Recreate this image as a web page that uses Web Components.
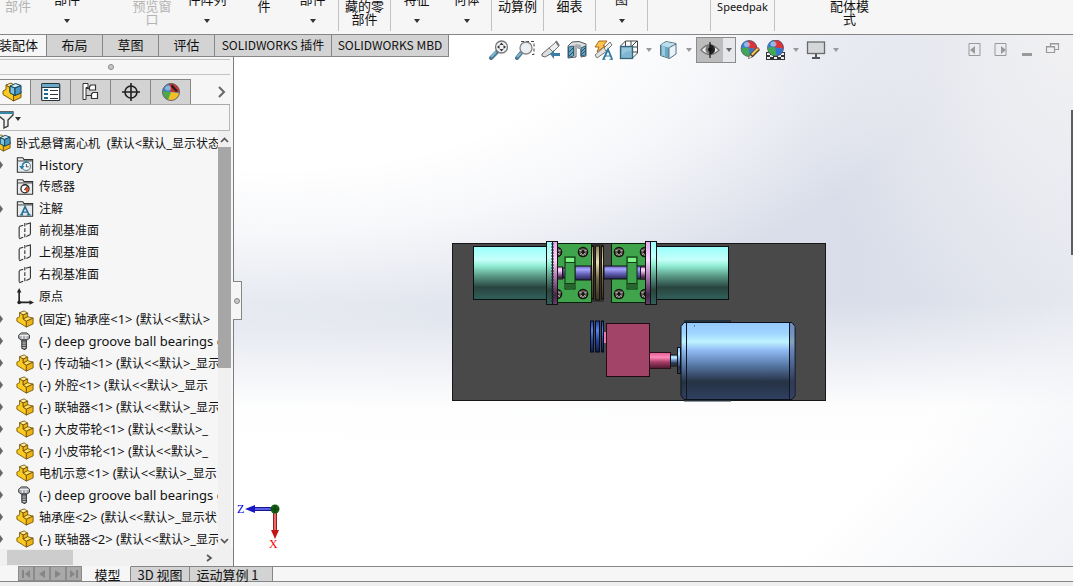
<!DOCTYPE html>
<html lang="zh-CN">
<head>
<meta charset="utf-8">
<meta name="viewport" content="width=device-width, initial-scale=1">
<title>SOLIDWORKS</title>
<style>
html,body{height:100%;margin:0}
body{font-family:"Noto Sans","Noto Sans CJK SC",sans-serif;font-size:12px;color:#111;overflow:hidden}
</style>
</head>
<body>
<cad-app></cad-app>
<script>
const arrow = c => `<svg width="6" height="4" viewBox="0 0 6 4"><path d="M0 0h6L3 4z" fill="${c}"/></svg>`;
const define = (name, css, html) => customElements.define(name, class extends HTMLElement {
  connectedCallback() {
    if (this.shadowRoot) return;
    const root = this.attachShadow({mode: 'open'});
    const markup = typeof html === 'function' ? html(this) : html;
    root.innerHTML = `<style>*{box-sizing:border-box}button{font:inherit;color:inherit;border:0;padding:0;margin:0;background:none}svg{display:block;flex:none}${css}</style>${markup}`;
  }
});

/* Small icons, all on a 20 x 20 grid */
const ball = (cx, cy, r) => `<g><circle cx="${cx}" cy="${cy}" r="${r}" fill="#3f86dc"/><path d="M${cx} ${cy}V${cy-r}A${r} ${r} 0 0 0 ${cx-r} ${cy}z" fill="#3a80d8"/><path d="M${cx-1} ${cy-r}A${r} ${r} 0 0 1 ${cx+r} ${cy+1}Q${cx+3} ${cy-1} ${cx} ${cy}z" fill="#d8343a"/><path d="M${cx-r} ${cy}Q${cx-3} ${cy-2} ${cx} ${cy}L${cx+1} ${cy+r}A${r} ${r} 0 0 1 ${cx-r} ${cy}z" fill="#43a854"/><path d="M${cx} ${cy}L${cx+r} ${cy+1}A${r} ${r} 0 0 1 ${cx+1} ${cy+r}z" fill="#3675cf"/><ellipse cx="${cx-2}" cy="${cy-r/2}" rx="3" ry="2.5" fill="#fff" opacity=".45"/><circle cx="${cx}" cy="${cy}" r="${r}" fill="none" stroke="#545c68" stroke-width=".7"/></g>`;
const block = `<g stroke="#6a4c00" stroke-width=".9" stroke-linejoin="round"><path d="M4 3l4 2.500V10l3.500 2.500v6.500L1 12.500V9l3-1.500z" fill="#fccb22"/><path d="M4 3l5-2 4 2.500-5 2z" fill="#fff0a0"/><path d="M8 5.500l5-2V8l-5 2z" fill="#eeb315"/><path d="M8 10l5-2.500L19 9l-7.500 3.500z" fill="#ffe066"/><path d="M11.500 12.500L19 9v6.500L11.500 19z" fill="#eeb315"/></g>`;
const ICONS = {
  part: block,
  asm: block + `<g stroke="#173f56" stroke-width="1" stroke-linejoin="round"><path d="M8 4l5 2v7.500L8 11z" fill="#7fc3e2"/><path d="M8 4l5.500-2.500L19 3.500 13 6z" fill="#c9ebf8"/><path d="M13 6l6-2.500V11l-6 2.500z" fill="#4b98c0"/></g>`,
  bolt: `<path d="M3 3.500L6 1h6l3 2.500V7l-3 2H6L3 7z" fill="#a9adb1" stroke="#303336"/><path d="M4 4h10M7 4v4m4-4v4" stroke="#f5f5f5"/><path d="M6.500 9h5v9l-2 1.500-3-1.500z" fill="#c3c6c9" stroke="#303336" stroke-width="1.200"/><path d="M6.500 11h5m-5 2.500h5m-5 2.500h5" stroke="#333"/>`,
  history: `<path d="M1.500 18v-16h6l1.500 2h9.500v14z" fill="#e8ebed" stroke="#333" stroke-width="1.200"/><path d="M2 5.500h16" stroke="#333"/><circle cx="11.500" cy="11.500" r="4.500" fill="#f4fbff" stroke="#46606e"/><path d="M7 11a4.500 4.500 0 0 1 7-3.500" stroke="#277ca8" stroke-width="1.600" fill="none"/><path d="M3.500 11h6l-3 4z" fill="#277ca8"/><path d="M11.500 9v3h2.500" stroke="#333" fill="none"/>`,
  sensor: `<path d="M1.500 18v-16h6l1.500 2h9.500v14z" fill="#e8ebed" stroke="#333" stroke-width="1.200"/><path d="M2 5.500h16" stroke="#333"/><circle cx="10" cy="12" r="4.500" fill="#fff" stroke="#222" stroke-width="1.400"/><path d="M10 12.500l3-3.500 1 4-2.500 3z" fill="#e44b24"/><path d="M9 13.500l4-5" stroke="#222"/>`,
  note: `<path d="M1.500 18v-16h6l1.500 2h9.500v14z" fill="#e8ebed" stroke="#333" stroke-width="1.200"/><path d="M2 5.500h16" stroke="#333"/><path d="M6 16.500l4-9 4.500 9" fill="none" stroke="#246c94" stroke-width="1.800"/><path d="M7.500 13.500H13M4.500 16.500h3.500m4 0h4.500" fill="none" stroke="#246c94" stroke-width="1.200"/>`,
  plane: `<path d="M3.500 17.500V5.500M3.500 5L8 3.500m3-1L16 1v12.500M16 14l-4.500 2M8 17l-4.500 1.500" fill="none" stroke="#2d2d2d" stroke-width="1.200"/><path d="M9.800 1v17" stroke="#2d2d2d" stroke-width="1.200" stroke-dasharray="4 2"/>`,
  origin: `<path d="M3.500 3v13H16" fill="none" stroke="#222" stroke-width="1.800"/><path d="M3.500 0L6 5H1zM20 16l-5-2.500v5z" fill="#222"/><circle cx="3.500" cy="16" r="2" fill="#222"/>`,
  list: `<rect x=".7" y="1.500" width="18" height="17" rx="1" fill="#fff" stroke="#26343e" stroke-width="1.200"/><path d="M1 2h17v3H1z" fill="#69a9ca"/><path d="M1 5.500h17" stroke="#26343e"/><path d="M3 7h4v2H3zm0 4h4v2H3zm0 4h4v2H3z" fill="#1f698e"/><path d="M9 8.500h8M9 12.500h8M9 16.500h8" stroke="#333"/>`,
  config: `<path d="M3.500 2v16M7.500 5.500h-4M9 13.500H3.500" fill="none" stroke="#333" stroke-width="1.200"/><path d="M2 1.500h5v4H5v12H2z" fill="#fff" stroke="#333"/><path d="M8.500 4.500L10 3h4.500v5h-6zM10.500 12l1.500-1.500h4.500v6h-6z" fill="#fff" stroke="#333" stroke-width="1.200"/><path d="M5 6.500h3M5 13.500h5" stroke="#333"/>`,
  target: `<circle cx="10" cy="10" r="6" fill="none" stroke="#202020" stroke-width="1.600"/><path d="M10 1v18M1 10h18" stroke="#202020" stroke-width="1.600"/>`,
  display: `<circle cx="10" cy="10" r="8.500" fill="#346bc1"/><path d="M10 10L1.500 10A8.500 8.500 0 0 1 10 1.500z" fill="#3984c6"/><path d="M10 10L8 1.500A8.500 8.500 0 0 1 18.500 10z" fill="#d82d2d"/><path d="M10 10L1.500 9A8.500 8.500 0 0 0 8 18z" fill="#51a849"/><path d="M10 10l8.500 1A8.500 8.500 0 0 1 7 18z" fill="#f0c127"/><path d="M11 2l6 7-2 1-5-5z" fill="#222"/><ellipse cx="7" cy="6" rx="3" ry="2.500" fill="#fff" opacity=".4"/><circle cx="10" cy="10" r="8.500" fill="none" stroke="#666"/>`,
  zoomfit: `<path d="M8 12l-6 6" stroke="#4b788f" stroke-width="4" stroke-linecap="round"/><path d="M7 12l-5 5" stroke="#79b6d2" stroke-width="2"/><circle cx="12.500" cy="7" r="6" fill="#eff3f5" stroke="#777" stroke-width="1.300"/><path d="M12.500 2.500l2 2.500h-4zm0 9l2-2.500h-4zM8 7l2.500-2v4zm9 0l-2.500-2v4z" fill="#333"/>`,
  zoomarea: `<path d="M6 1.500h13v13h-4" fill="none" stroke="#444" stroke-dasharray="3 2"/><path d="M6 13l-4 5" stroke="#4b788f" stroke-width="4" stroke-linecap="round"/><path d="M6 13l-4 4" stroke="#79b6d2" stroke-width="2"/><circle cx="11" cy="8" r="6" fill="#e9eff2" stroke="#858585" stroke-width="1.300"/>`,
  prev: `<path d="M1 14l8-7 4 5-9 5-3-1z" fill="#dedede" stroke="#666"/><path d="M8 8l7-6 3 4-6 6z" fill="#efefef" stroke="#777"/><path d="M15 1l3 5" stroke="#777" stroke-width="2"/><path d="M9 14l4-4v3h6v3h-6v3z" fill="#397fa5"/>`,
  section: `<path d="M1 6l4-4q7-2 14 2v12l-5 1V9L9 7v10l-8 1z" fill="#dedede" stroke="#505a60"/><path d="M1.500 7l5-1v10l-5 1.500zM14 8l4.500-2v9L14 16z" fill="#6aa7c4" stroke="#325f76"/><path d="M2 12l4-4M2 16l4-4m8 0l4-4m-4 7l4-4" stroke="#204e65"/><path d="M7 6l2-2 5 1v4L9 8v8H7z" fill="#a8adb0"/>`,
  annot: `<path d="M2 15l9-8 3 4-10 7z" fill="#e3e3e3" stroke="#777"/><path d="M11 8l6-6 2 3-6 6z" fill="#eee" stroke="#777"/><path d="M6 1h8l-4 5h2l-8 6 2-5H2z" fill="#ffc44d" stroke="#a86a24"/><path d="M10.500 19L15 9.500 19 19" fill="none" stroke="#2e789f" stroke-width="1.800"/><path d="M12 16h5.500M9 19.300h3.500m4 0H20" stroke="#2e789f"/>`,
  orient: `<path d="M1.500 6l5-5h12v12l-5 5M6.500 1v5M12 1v5m1 0l5-5M14 7h4m-4 5h4" fill="none" stroke="#444"/><rect x="1.500" y="6.500" width="12" height="12" fill="#80b6cf" stroke="#35657c" stroke-width="1.300"/><path d="M3 8h9v3q-5 0-9 4z" fill="#a7d2e5" opacity=".6"/>`,
  cube: `<path d="M1.500 5L7 1.500l10 2V14l-6.500 4.500-9-3z" fill="#eaf4f8" stroke="#527080"/><path d="M2 5l8 2.500V18l-8-3z" fill="#69a8c5"/><path d="M2 5l5-3 9 2-6 3.500z" fill="#b9deec"/><path d="M10 7.500v11M10.500 7.500L17 4" stroke="#527080"/><path d="M3 6l3 1v9l-3-1z" fill="#bce1ef" opacity=".6"/>`,
  eye: `<path d="M1 10q8-10 18 0-9 9-18 0z" fill="#eee" stroke="#777" stroke-width="1.400"/><circle cx="10" cy="9.500" r="4.600" fill="#777"/><path d="M10 4.500a5 5 0 0 1 0 10z" fill="#222"/><circle cx="10" cy="9.500" r="2" fill="#111"/><path d="M10 2v16" stroke="#111" stroke-width="1.200"/>`,
  appearance: ball(9,8.500,8) + `<path d="M8 19l2-5 7-7 3 3-7 7z" fill="#4e3d2c"/><path d="M11 14l6-6 1.500 1.500-6 6z" fill="#f2c853"/><path d="M9 18l1-3 2 2z" fill="#fff3cf"/><path d="M17 8l1-1 2 2-1 1z" fill="#d36b66"/>`,
  scene: `<path d="M0 12h19v8H0z" fill="#333"/><path d="M1 13h3v2H1zm14 0h3v2h-3zM4 15h3v2H4zm8 0h3v2h-3zM1 17h3v2H1zm7 0h3v2H8zm7 0h3v2h-3z" fill="#eee"/>` + ball(9.500,8,8),
  monitor: `<rect x="1.500" y="2" width="17" height="11.500" fill="#d4d7da" stroke="#6a6a6a" stroke-width="1.300"/><path d="M9 14h2v3h3v2H6v-2h3z" fill="#555"/>`,
  dockL: `<path d="M4 3.500h11v12H4z" fill="none" stroke="#999"/><path d="M10 6v8L5 10z" fill="#999"/>`,
  dockR: `<path d="M4 3.500h11v12H4z" fill="none" stroke="#999"/><path d="M10 6v8l5-4z" fill="#999"/>`,
  min: `<path d="M5 13h10v3H5z" fill="#999"/>`,
  restore: `<path d="M7.500 6V3.500h8v6H12M3.500 6.500h8v6h-8zM7.500 4h8M3.500 7h8" fill="none" stroke="#999" stroke-width="1.200"/>`
};
define('cad-icon', `:host{display:block;width:20px;height:20px;flex:none}svg{width:100%;height:100%}`,
  el => `<svg viewBox="0 0 20 20" aria-hidden="true">${ICONS[el.getAttribute('name')]}</svg>`);

define('ribbon-item', `
:host{display:block;flex:none;width:var(--w);height:31px;font-size:13px}
:host([ruled]){border-left:1px solid #c2c2c2}
:host([small]){font-size:11px}
button{display:flex;flex-direction:column;align-items:center;width:100%;height:31px;line-height:13px;white-space:nowrap;overflow:hidden}
button.menu{justify-content:flex-end;padding-bottom:8px;gap:13px}
span{display:block;flex:none}
:host([disabled]) button{color:#b4b4b4}`,
  el => {
    const menu = el.hasAttribute('menu');
    return `<button class="${menu ? 'menu' : ''}" ${el.hasAttribute('disabled') ? 'disabled' : ''}><span><slot></slot></span>${menu ? arrow('#333') : ''}</button>`;
  });

const RIBBON = [['部件',36,'disabled'],['部件',62,'menu'],['',19],['预览窗<br>口',70,'disabled'],['件阵列',40,'menu'],['',14],['件',46],['部件',51,'menu'],['藏的零<br>部件',52,'ruled'],['特征',52,'ruled menu'],['何体',49,'menu'],['动算例',52,'ruled'],['细表',52,'ruled'],['图',52,'ruled menu'],['',63,'ruled'],['Speedpak',64,'ruled small'],['配体模<br>式',150,'ruled']];
define('cad-ribbon', `
:host{display:flex;height:35px;background:#f6f6f6;border-bottom:1px solid #868686;overflow:hidden}
.gap{flex:none;width:var(--w)}`,
  RIBBON.map(([t,w,a='']) => t || a ? `<ribbon-item style="--w:${w}px" ${a}>${t}</ribbon-item>` : `<div class="gap" style="--w:${w}px"></div>`).join(''));

define('command-tabs', `
:host{display:flex;height:22px;border-bottom:1px solid #868686;background:#d3d3d3;font-size:13px;font-family:"Noto Sans CJK SC",sans-serif}
button{flex:1 1 56px;border-right:1px solid #868686;line-height:20px;white-space:nowrap;min-width:0;display:flex;justify-content:center}
button.on{flex:0 0 47px;background:#f6f6f6;justify-content:flex-end;padding-right:8px;overflow:hidden}
button.wide{flex:0 0 117px;font-size:12px}`,
  `<button class="on">装配体</button><button>布局</button><button>草图</button><button>评估</button><button class="wide">SOLIDWORKS 插件</button><button class="wide">SOLIDWORKS MBD</button>`);

define('view-toolbar', `
:host{display:flex;justify-content:space-between;padding-left:40px;padding-right:10px;height:30px;align-items:center}
nav,aside{display:flex;align-items:center;gap:6px}
button{display:flex;align-items:center;flex:none}
.split{display:flex;border:1px solid #8b8b8b;height:26px;background:#bcbcbc;width:40px;margin:0 -2px 0 -3px}
.split button{height:24px}
.split button:first-child{width:26px;padding-left:3px}
.split button:last-child{width:12px;background:#e5e7eb;justify-content:center}
.drop{width:8px;justify-content:center}`,
  () => {
    const b = (n, l) => `<button aria-label="${l}"><cad-icon name="${n}"></cad-icon></button>`;
    const d = `<button class="drop" aria-label="更多">${arrow('#999')}</button>`;
    return `<nav>${b('zoomfit','整屏显示全图')}${b('zoomarea','局部放大')}${b('prev','上一视图')}${b('section','剖面视图')}${b('annot','动态注解')}${b('orient','视图定向')}${d}${b('cube','显示样式')}${d}<div class="split"><button aria-label="隐藏/显示"><cad-icon name="eye"></cad-icon></button><button aria-label="更多">${arrow('#666')}</button></div>${b('appearance','编辑外观')}${b('scene','应用布景')}${d}${b('monitor','视图设定')}${d}</nav><aside>${b('dockL','左')}${b('dockR','右')}${b('min','最小化')}${b('restore','还原')}</aside>`;
  });

define('manager-tabs', `
:host{display:flex;height:26px;border-bottom:1px solid #a8a8a8;margin-right:3px}
button{width:40px;background:#d3d3d3;border:1px solid #868686;border-left:0;border-bottom:0;display:flex;align-items:center;justify-content:center}
button.on{width:31px;background:#f6f6f6;justify-content:flex-start;padding-left:2px}
button.more{margin-left:auto;width:16px;background:none;border:0}`,
  `<button class="on" aria-label="设计树"><cad-icon name="asm"></cad-icon></button><button aria-label="属性"><cad-icon name="list"></cad-icon></button><button aria-label="配置"><cad-icon name="config"></cad-icon></button><button aria-label="尺寸专家"><cad-icon name="target"></cad-icon></button><button aria-label="显示管理"><cad-icon name="display"></cad-icon></button><button class="more" aria-label="更多"><svg width="8" height="12" viewBox="0 0 8 12"><path d="M1 1l5 5-5 5" fill="none" stroke="#666" stroke-width="2"/></svg></button>`);

define('tree-item', `
:host{display:flex;align-items:center;height:22px;white-space:nowrap;font-size:12px;line-height:22px;color:#111}
.mark{flex:none;width:16px;display:flex}
cad-icon{width:18px;height:18px}
.label{padding-left:5px}
:host([root]) .mark{display:none}
:host([root]) cad-icon{margin-left:-7px}
:host([root]) .label{padding-left:5px}
::slotted(span){font-size:13px}`,
  el => `<span class="mark">${el.hasAttribute('expandable') ? '<svg width="4" height="8" viewBox="0 0 4 8"><path d="M0 0l3 4-3 4z" fill="#666"/></svg>' : ''}</span><cad-icon name="${el.getAttribute('icon')}"></cad-icon><span class="label"><slot></slot></span>`);

const TREE = [['asm','卧式悬臂离心机  (默认<默认_显示状态-1>','root'],['history','History','expandable'],['sensor','传感器'],['note','注解','expandable'],['plane','前视基准面'],['plane','上视基准面'],['plane','右视基准面'],['origin','原点'],
['part','(固定) 轴承座<1> (默认<<默认>','expandable'],['bolt','(-) deep groove ball bearings gb','expandable'],['part','(-) 传动轴<1> (默认<<默认>_显示','expandable'],['part','(-) 外腔<1> (默认<<默认>_显示','expandable'],['part','(-) 联轴器<1> (默认<<默认>_显示','expandable'],['part','(-) 大皮带轮<1> (默认<<默认>_','expandable'],['part','(-) 小皮带轮<1> (默认<<默认>_','expandable'],['part','电机示意<1> (默认<<默认>_显示','expandable'],['bolt','(-) deep groove ball bearings gb','expandable'],['part','轴承座<2> (默认<<默认>_显示状','expandable'],['part','(-) 联轴器<2> (默认<<默认>_显示','expandable']];
/* Latin runs are set one size above the Chinese ones */
const label = t => t.replace(/[\x20-\x7e]+/g, s => `<span>${s.replace(/</g, '&lt;').replace(/>/g, '&gt;').replace(/  /g, ' &nbsp;')}</span>`);
define('feature-panel', `
:host{display:flex;flex-direction:column;background:#f6f6f6;border-right:1px solid #7c7c7c;min-height:0;position:relative}
.grip{height:16px;margin:2px 3px 4px 0;border:solid #c4c4c4;border-width:1px 0;display:flex;align-items:center;justify-content:center;padding-right:8px}
.grip i,.handle i{width:6px;height:6px;border-radius:50%;border:1px solid #888;background:#c8c8c8}
.filter{height:26px;margin-right:3px;border:solid #b8b8b8;border-width:0 1px 1px 0;display:flex;align-items:center}
.filter button{display:flex;align-items:center;gap:1px;padding-top:3px}
.body{flex:1;min-height:0;display:grid;grid-template-columns:1fr 13px;margin-right:2px}
.tree{overflow:hidden;min-width:0;padding-top:1px}
.v{display:flex;flex-direction:column;align-items:center;justify-content:space-between;background:#f0f0f0;padding:6px 0 5px}
.v .thumb{align-self:stretch;background:#a6a6a6;flex:0 0 221px;margin:4px 0 auto}
.h{height:17px;display:flex;align-items:center;background:#f0f0f0}
.h .thumb{width:66px;height:15px;background:#cdcdcd;margin:0 auto 0 7px}
.h svg{margin-right:20px}
.handle{position:absolute;left:100%;top:224px;width:9px;height:39px;background:#f6f6f6;border:1px solid #868686;border-left:0;display:flex;align-items:center;justify-content:center}`,
  `<div class="grip"><i></i></div><manager-tabs></manager-tabs>
<div class="filter"><button aria-label="过滤器"><svg width="14" height="19" viewBox="0 0 14 19"><path d="M-5 2h18v3L8 10v6l-4 2v-8L-5 3" fill="#f0f0f0" stroke="#333" stroke-width="1.300"/><path d="M0 2h13v2H0z" fill="#3586a8"/></svg>${arrow('#333')}</button></div>
<div class="body"><div class="tree">${TREE.map(([i,t,a='']) => `<tree-item icon="${i}" ${a}>${label(t)}</tree-item>`).join('')}</div>
<div class="v"><svg width="9" height="6" viewBox="0 0 9 6"><path d="M1 5l3.500-3.500L8 5" fill="none" stroke="#555" stroke-width="1.700"/></svg><div class="thumb"></div><svg width="9" height="6" viewBox="0 0 9 6"><path d="M1 1l3.500 3.500L8 1" fill="none" stroke="#555" stroke-width="1.700"/></svg></div></div>
<div class="h"><div class="thumb"></div><svg width="7" height="8" viewBox="0 0 7 8"><path d="M1 1l4 3-4 3" fill="none" stroke="#555" stroke-width="1.700"/></svg></div>
<div class="handle"><i></i></div>`);

/* Machine assembly, drawn in model coordinates shifted to the canvas corner */
const screw = (x, y) => `<g transform="translate(${x} ${y})"><circle r="5.300" fill="#16130f"/><circle r="3.700" fill="#6f6761"/><circle r="2" fill="#17130f"/><path d="M-4-2l3 1M4-2L1-1M0 4V2M-3 3l2-2M3 3L1 1" stroke="#bbb" stroke-width=".8"/></g>`;
const bearing = x => `<rect x="${x}" y="257" width="10" height="32" fill="#40a44c" stroke="#0a2c0e"/><path d="M${x+1} 258h8v4h-8z" fill="#7bf186"/><path d="M${x} 262.500h10M${x} 283.500h10" stroke="#143d17"/><path d="M${x+1} 284h8v4h-8z" fill="#28652e"/>`;
define('model-view', `:host{display:block;min-width:0;min-height:0;overflow:hidden}svg{width:100%;height:100%}text{font:12px "Liberation Serif",serif}`,
`<svg role="img" aria-label="卧式悬臂离心机装配体"><defs>
<linearGradient id="drum" x2="0" y2="1"><stop offset="0" stop-color="#98fffb"/><stop offset=".25" stop-color="#c6fffa"/><stop offset=".36" stop-color="#94efd6"/><stop offset=".55" stop-color="#5b9c88"/><stop offset=".77" stop-color="#29443f"/><stop offset="1" stop-color="#32605a"/></linearGradient>
<linearGradient id="pink" x2="0" y2="1"><stop offset="0" stop-color="#e5a9ee"/><stop offset=".3" stop-color="#fbd5fd"/><stop offset=".6" stop-color="#9e6da4"/><stop offset=".85" stop-color="#402845"/><stop offset="1" stop-color="#69406d"/></linearGradient>
<linearGradient id="shaft" x2="0" y2="1"><stop offset="0" stop-color="#6864b8"/><stop offset=".25" stop-color="#a6a5ff"/><stop offset=".6" stop-color="#605eb0"/><stop offset="1" stop-color="#25234f"/></linearGradient>
<linearGradient id="wheel" x2="0" y2="1"><stop offset="0" stop-color="#887c54"/><stop offset=".3" stop-color="#eee1b0"/><stop offset=".6" stop-color="#746846"/><stop offset="1" stop-color="#393322"/></linearGradient>
<linearGradient id="blue" x2="0" y2="1"><stop offset="0" stop-color="#1a3b91"/><stop offset=".3" stop-color="#5685ef"/><stop offset=".6" stop-color="#254aa0"/><stop offset="1" stop-color="#101d43"/></linearGradient>
<linearGradient id="rose" x2="0" y2="1"><stop offset="0" stop-color="#e15b92"/><stop offset=".3" stop-color="#ff8abb"/><stop offset=".6" stop-color="#a53d67"/><stop offset="1" stop-color="#4b182e"/></linearGradient>
<linearGradient id="motor" x2="0" y2="1"><stop offset="0" stop-color="#95c9ff"/><stop offset=".14" stop-color="#9fd5ff"/><stop offset=".25" stop-color="#c0f4ff"/><stop offset=".36" stop-color="#91bbf4"/><stop offset=".55" stop-color="#587aa9"/><stop offset=".77" stop-color="#263244"/><stop offset="1" stop-color="#304061"/></linearGradient></defs>
<g transform="translate(-234 -57)" stroke-width="1">
<rect x="452.500" y="243.500" width="373" height="157" fill="#494949" stroke="#171717"/>
<g stroke="#061010"><rect x="473.500" y="246.500" width="74" height="53" fill="url(#drum)"/><rect x="655.500" y="246.500" width="73" height="53" fill="url(#drum)"/></g>
<g fill="#40a44c" stroke="#07210a"><rect x="557.500" y="243.500" width="34" height="59"/><rect x="611.500" y="243.500" width="34" height="59"/></g>
${[[557,252],[583,252],[557,294],[583,294],[619,252],[645,252],[619,294],[645,294]].map(p => screw(...p)).join('')}
<path d="M592 244h12v58h-12z" fill="#333"/><g stroke="#111" fill="url(#shaft)"><path d="M563 268h28v10h-28zM604 266h42v13h-42z"/><path d="M575 266h16v14h-16z"/></g>
${bearing(565)}${bearing(627)}
<g stroke="#1d141f" fill="url(#pink)"><rect x="557.500" y="267" width="5" height="12"/><rect x="640.500" y="267" width="5" height="12"/></g>
<g stroke="#111"><rect x="546.500" y="241.500" width="6" height="63" fill="url(#drum)"/><rect x="552.500" y="241.500" width="5" height="63" fill="url(#pink)"/><rect x="645.500" y="241.500" width="5" height="63" fill="url(#pink)"/><rect x="650.500" y="241.500" width="6" height="63" fill="url(#drum)"/></g>
<path d="M552.500 243v60" stroke="#222" stroke-width="2" stroke-dasharray="2 1"/>
<g stroke="#15130c" fill="url(#wheel)"><rect x="591.500" y="246" width="2" height="53"/><rect x="595.500" y="246" width="4" height="54"/><rect x="601.500" y="246" width="2" height="53"/></g>
<g stroke="#050c20" fill="url(#blue)"><rect x="590.500" y="321" width="3" height="31"/><rect x="595.500" y="321" width="4" height="31"/><rect x="601.500" y="321" width="2" height="31"/></g><path d="M604 332h3v11h-3z" fill="#f07aab"/>
<rect x="606.500" y="323.500" width="43" height="53" fill="#a14468" stroke="#210b14"/>
<rect x="649.500" y="352.500" width="21" height="16" fill="url(#rose)" stroke="#29101b"/><rect x="670.500" y="355" width="7" height="11" fill="url(#motor)" stroke="#111"/><rect x="677.500" y="347.500" width="3" height="26" fill="url(#motor)" stroke="#111"/>
<path d="M684 321h47M684 400.500h47" stroke="#26303a" stroke-width="2"/><path d="M684 322.500h108l3 4v69l-3 4H684l-3-4v-69z" fill="url(#motor)" stroke="#0b121c"/><path d="M686.500 323v76M789.500 323v76" stroke="#111722"/><path d="M790 323h2l3 4v68l-3 4h-2z" fill="#384570" opacity=".45"/><path d="M694 326h1" stroke="#345"/>
</g>
<svg x="0" y="440" width="60" height="60" overflow="visible"><path d="M16 12h22" stroke="#15158e" stroke-width="4"/><path d="M16 12h22" stroke="#5c60e8" stroke-width="2"/><path d="M11 12l10-4v8z" fill="#1b16c5"/><path d="M41 15v20" stroke="#8b2020" stroke-width="4"/><path d="M41 15v20" stroke="#ef6b6b" stroke-width="2"/><path d="M37 33h8l-4 9z" fill="#c21515"/><circle cx="41" cy="12" r="4.500" fill="#155f16"/><path d="M41 8v8M37 12h8" stroke="#083e0a"/><text x="3" y="16" fill="#0000f0">Z</text><text x="35" y="51" fill="#f00">X</text></svg>
</svg>`);

define('study-tabs', `
:host{display:block;background:#f6f6f6;font-family:"Noto Sans CJK SC",sans-serif;font-size:13px}
.row{display:flex;height:16px;padding-left:18px;border-bottom:1px solid #868686}
.row:after{content:"";flex:1;border-top:1px solid #868686}
button{height:15px;line-height:13px;white-space:nowrap;border-right:1px solid #868686;background:#d3d3d3;border-top:1px solid #868686}
.nav{width:16px;background:#a9a9a9;border:1px solid #8b8b8b;display:flex;justify-content:center;align-items:center}
.on{width:49px;padding-left:3px;background:#f6f6f6;border-top-color:#f6f6f6}.three{width:59px}.study{width:83px;padding-right:7px}
.status{height:4px;background:#f0f0f0}`,
  () => {
    const n = (p, l) => `<button class="nav" aria-label="${l}"><svg width="10" height="10" viewBox="0 0 10 10"><path d="${p}" fill="#858585"/></svg></button>`;
    return `<div class="row">${n('M1 1h2v8H1zM9 1v8L4 5z','第一')}${n('M8 1v8L2 5z','上一')}${n('M2 1v8l6-4z','下一')}${n('M7 1h2v8H7zM1 1v8l5-4z','最后')}<button class="on">模型</button><button class="three">3D 视图</button><button class="study">运动算例 1</button></div><div class="status"></div>`;
  });

define('cad-app', `
:host{display:flex;flex-direction:column;height:100vh;background:#fff}
main{flex:1;min-height:0;display:grid;grid-template-columns:234px 215px 1fr;grid-template-rows:22px 8px minmax(0,1fr);position:relative;
background:
linear-gradient(135deg,rgba(238,240,245,0) 82%,rgba(238,240,245,.9) 100%),
linear-gradient(180deg,rgba(255,255,255,0) 50%,rgba(255,255,255,.45) 60%,rgba(255,255,255,.95) 70%,#fff 78%),
radial-gradient(ellipse 62% 56% at 26% 0,#fff 45%,rgba(255,255,255,.75) 66%,rgba(255,255,255,0) 100%),
radial-gradient(ellipse 26% 60% at 100% 0,#f1f1f3,rgba(238,239,243,0)),
linear-gradient(90deg,#e0e4ed 20%,#d9dde9 80%,#e3e6ee 100%)}
command-tabs{grid-area:1/1/2/3}
view-toolbar{grid-area:1/3/3/4}
feature-panel{grid-area:2/1/4/2;z-index:1}
model-view{grid-area:2/2/4/4}
.edge{position:absolute;right:0;top:75px;width:2px;height:145px;background:#5a5d63}`,
`<cad-ribbon></cad-ribbon><main><command-tabs></command-tabs><view-toolbar></view-toolbar><feature-panel></feature-panel><model-view></model-view><div class="edge"></div></main><study-tabs></study-tabs>`);
</script>
</body>
</html>
